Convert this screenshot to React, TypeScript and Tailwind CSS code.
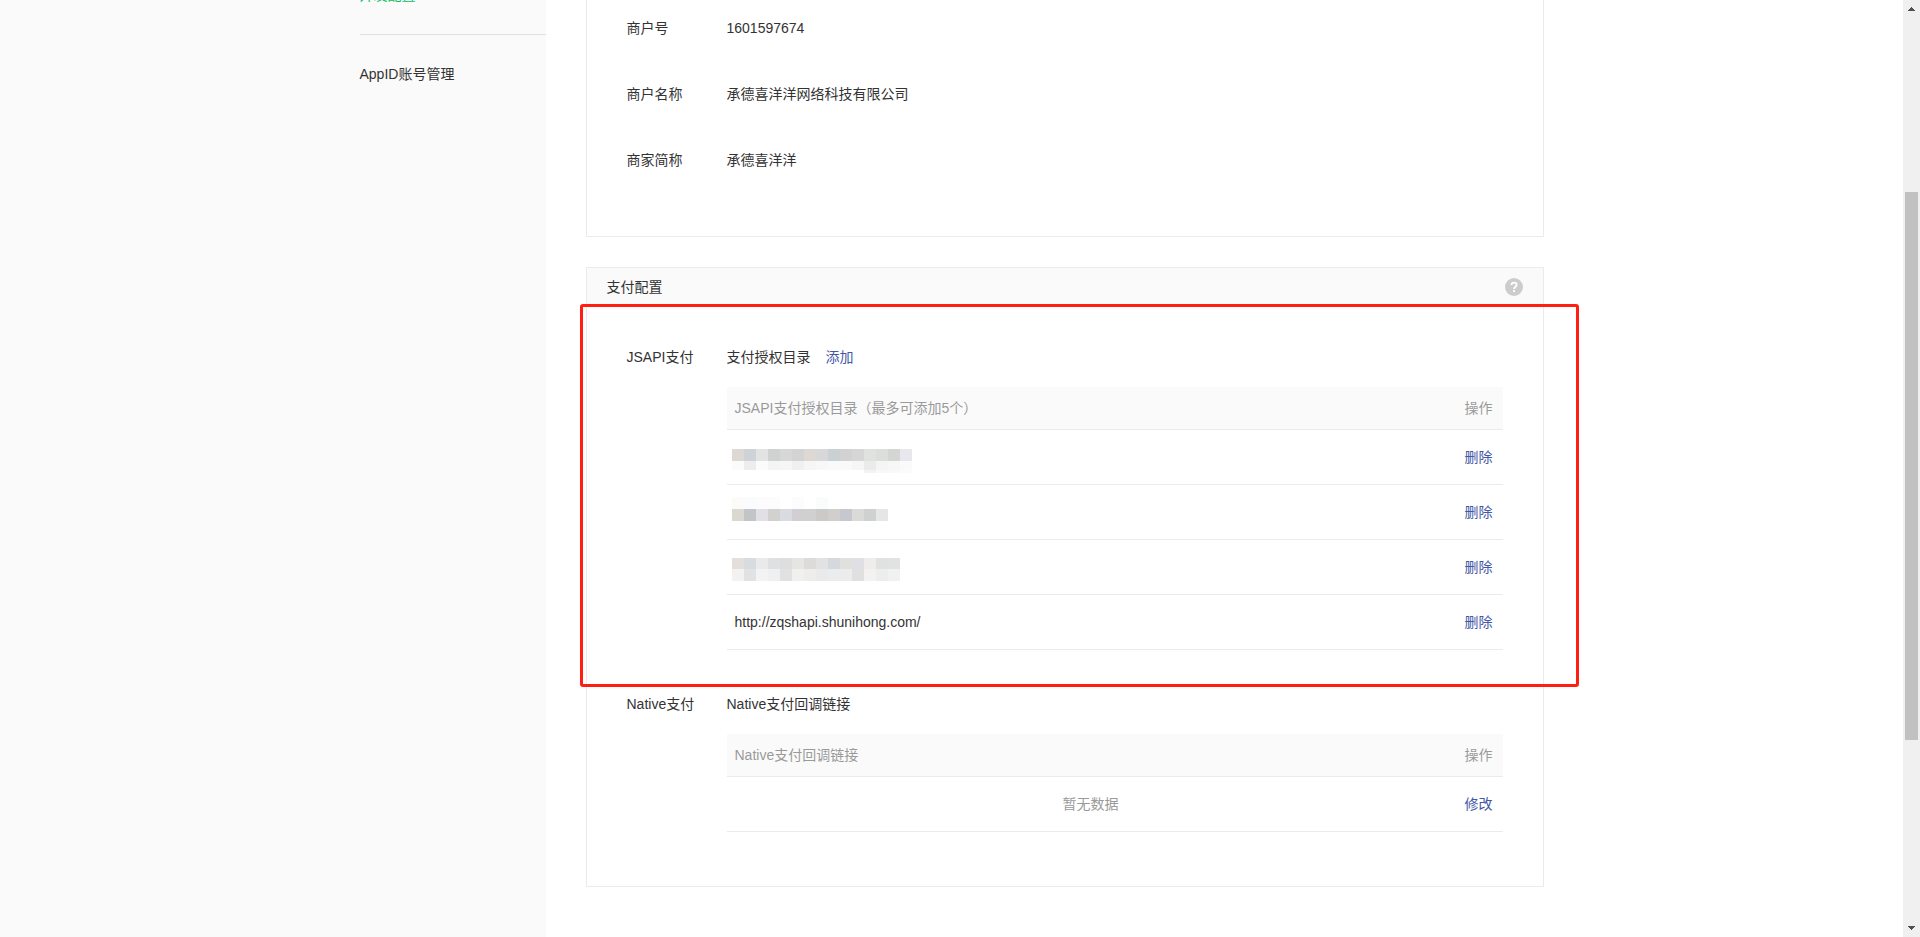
import type { ReactNode } from 'react';

const merchantInfo = [
  { label: '商户号', value: '1601597674' },
  { label: '商户名称', value: '承德喜洋洋网络科技有限公司' },
  { label: '商家简称', value: '承德喜洋洋' },
];

type Band = { y: number; height: number; colors: string[] };

const maskedUrls: { label: string; bands: Band[] }[] = [
  {
    label: '已隐藏的目录 1',
    bands: [
      {
        y: 19,
        height: 12,
        colors: ['#dcd8d3', '#cdd3d6', '#e3e3e3', '#d0d2d1', '#d7d7d8', '#d4d3d4', '#ddd8d4', '#d8d8d8', '#c9d1d3', '#d3d2d1', '#d6d6d6', '#dfe2df', '#dedddd', '#d3d6d2', '#e7e7ed'],
      },
      {
        y: 31,
        height: 9,
        colors: ['#fbfbfb', '#eeecee', '#fbfbfb', '#f6f4f3', '#f6f6f6', '#f1f0f1', '#f7f6f6', '#f8f8f8', '#f9fafa', '#f9f9f9', '#f6f6f6', '#ebebeb', '#f5f5f5', '#f7f7f7', '#fafafa'],
      },
      {
        y: 40,
        height: 3,
        colors: ['#ffffff', '#ffffff', '#ffffff', '#ffffff', '#ffffff', '#ffffff', '#ffffff', '#ffffff', '#ffffff', '#ffffff', '#ffffff', '#f3f3f3', '#f8f8f8', '#f9f9f9', '#fbfbfb'],
      },
    ],
  },
  {
    label: '已隐藏的目录 2',
    bands: [
      {
        y: 12,
        height: 12,
        colors: ['#fdfbf9', '#f9fbfd', '#fcfcfd', '#fcfcfc', '#ffffff', '#fcfcfd', '#ffffff', '#fafcfb', '#ffffff', '#ffffff', '#ffffff', '#ffffff', '#ffffff'],
      },
      {
        y: 24,
        height: 12,
        colors: ['#dbd8d1', '#c3c4c7', '#e2e0e4', '#d2d1cf', '#d8dce0', '#d1cfd1', '#cfd0cf', '#cccac9', '#d0cfcc', '#c6c8d0', '#dadad9', '#cfd1d0', '#e6e6e9'],
      },
    ],
  },
  {
    label: '已隐藏的目录 3',
    bands: [
      {
        y: 18,
        height: 11,
        colors: ['#e4dfdb', '#d6dce0', '#ebeaeb', '#dee0e2', '#dedede', '#e6e5e4', '#dcdbd9', '#e2e2e2', '#d5d9dd', '#e2e0dd', '#dee0e3', '#efedec', '#e0e2e2', '#e1e2e4'],
      },
      {
        y: 29,
        height: 12,
        colors: ['#f3f2f1', '#e2e2e2', '#f3f3f3', '#f0f0f0', '#e1e1e1', '#f0f0ee', '#eeedec', '#eaeaea', '#eaecee', '#ececec', '#e0e0e1', '#f3f2f0', '#eceeed', '#f1f1f1'],
      },
    ],
  },
];

function MaskedUrl({ label, bands }: { label: string; bands: Band[] }) {
  return (
    <svg className="block h-[54px] w-[180px]" viewBox="0 0 180 54" shapeRendering="crispEdges" role="img" aria-label={label}>
      {bands.map((band) =>
        band.colors.map((color, i) => (
          <rect key={`${band.y}-${i}`} x={i * 12} y={band.y} width={12} height={band.height} fill={color} />
        )),
      )}
    </svg>
  );
}

function Field({ label, children }: { label: string; children: ReactNode }) {
  return (
    <div className="flex">
      <div className="w-[100px] shrink-0">{label}</div>
      <div className="min-w-0 flex-1">{children}</div>
    </div>
  );
}

function ConfigTable({ heading, children }: { heading: string; children: ReactNode }) {
  return (
    <table className="mt-[19px] w-full table-fixed border-separate border-spacing-0 text-left">
      <thead>
        <tr className="h-[43px] bg-[#fafafa] text-[#9a9a9a]">
          <th className="border-b border-[#ebebeb] px-2 font-normal">{heading}</th>
          <th className="w-12 border-b border-[#ebebeb] pl-2.5 font-normal">操作</th>
        </tr>
      </thead>
      <tbody>{children}</tbody>
    </table>
  );
}

function ConfigRow({ action, children }: { action: string; children: ReactNode }) {
  return (
    <tr className="h-[55px]">
      {children}
      <td className="border-b border-[#ebebeb] p-0 pl-2.5">
        <button type="button" className="block cursor-pointer text-[#4257a5]">
          {action}
        </button>
      </td>
    </tr>
  );
}

function ScrollRail() {
  return (
    <div className="flex w-[17px] shrink-0 flex-col items-center bg-[#f0f0f0]" aria-hidden="true">
      <svg className="h-[17px] w-[17px]" viewBox="0 0 17 17" shapeRendering="crispEdges">
        <path d="M8 7h1v1h1v1h1v1h1v1H5v-1h1V9h1V8h1z" fill="#505050" />
      </svg>
      <div className="flex-[175]" />
      <div className="w-[13px] flex-[548] bg-[#c1c1c1]" />
      <div className="flex-[180]" />
      <svg className="h-[17px] w-[17px]" viewBox="0 0 17 17" shapeRendering="crispEdges">
        <path d="M5 6h7v1h-1v1h-1v1H9v1H8V9H7V8H6V7H5z" fill="#505050" />
      </svg>
    </div>
  );
}

export default function App() {
  return (
    <div className="flex min-h-screen overflow-hidden bg-white font-['Liberation_Sans','Noto_Sans_CJK_SC',sans-serif] text-sm leading-[22px] text-[#333]">
      <div className="flex-1 bg-[#fafafa]" />
      <nav className="w-[186px] bg-[#fafafa]">
        <div className="-mt-4 border-b border-[#e0e0e0] pb-7">
          <a href="#config" className="block text-[#07c160]">开发配置</a>
        </div>
        <a href="#appid" className="mt-7 block">AppID账号管理</a>
      </nav>

      <main className="w-[998px] pl-10">
        <section className="flex flex-col gap-11 border border-t-0 border-[#ebebeb] px-10 pt-[17px] pb-[65px]">
          {merchantInfo.map((item) => (
            <Field key={item.label} label={item.label}>
              {item.value}
            </Field>
          ))}
        </section>

        <section className="mt-[30px] border border-[#ebebeb]">
          <header className="flex h-[38px] items-center justify-between bg-[#fafafa] px-5">
            <h2>支付配置</h2>
            <button type="button" aria-label="帮助" className="cursor-pointer">
              <svg className="block h-[18px] w-[18px]" viewBox="0 0 18 18" fill="none">
                <circle cx="9" cy="9" r="9" fill="#ccc" />
                <path d="M6.4 7.1C6.4 5.5 7.5 4.6 9 4.6s2.6.9 2.6 2.3c0 1.8-2.5 2-2.5 4" stroke="#fff" strokeWidth="1.8" />
                <rect x="8.1" y="12.1" width="1.9" height="1.9" fill="#fff" />
              </svg>
            </button>
          </header>

          <div className="relative px-10 pt-10 pb-[43px]">
            <Field label="JSAPI支付">
              <div className="flex gap-[15px]">
                支付授权目录
                <button type="button" className="cursor-pointer text-[#4257a5]">添加</button>
              </div>
              <ConfigTable heading="JSAPI支付授权目录（最多可添加5个）">
                {maskedUrls.map((url) => (
                  <ConfigRow key={url.label} action="删除">
                    <td className="border-b border-[#ebebeb] p-0 pl-[5px]">
                      <MaskedUrl label={url.label} bands={url.bands} />
                    </td>
                  </ConfigRow>
                ))}
                <ConfigRow action="删除">
                  <td className="border-b border-[#ebebeb] px-2 py-0">http://zqshapi.shunihong.com/</td>
                </ConfigRow>
              </ConfigTable>
            </Field>
            <div className="pointer-events-none absolute -top-0.5 -right-9 bottom-1.5 -left-[7px] rounded-[3px] border-3 border-[#ff1e10]" />
          </div>

          <div className="px-10 pb-[54px]">
            <Field label="Native支付">
              <div>Native支付回调链接</div>
              <ConfigTable heading="Native支付回调链接">
                <ConfigRow action="修改">
                  <td className="border-b border-[#ebebeb] p-0 text-center text-[#9a9a9a]">暂无数据</td>
                </ConfigRow>
              </ConfigTable>
            </Field>
          </div>
        </section>
      </main>

      <div className="flex-1" />
      <ScrollRail />
    </div>
  );
}
